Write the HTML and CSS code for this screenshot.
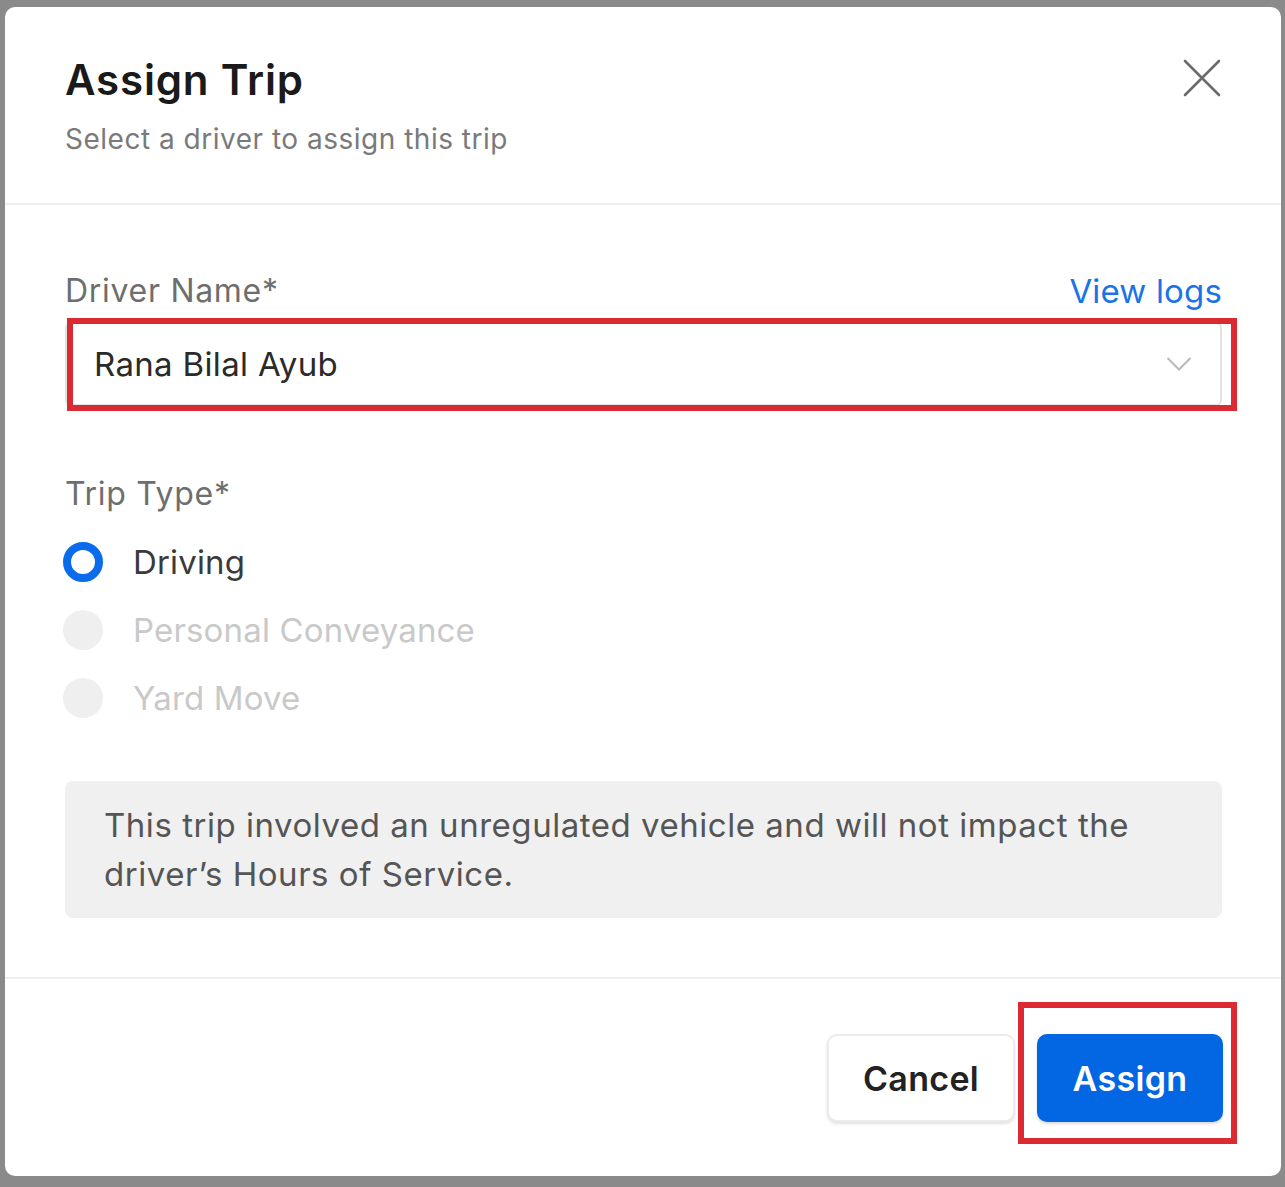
FILE: index.html
```html
<!DOCTYPE html>
<html lang="en">
<head>
<meta charset="utf-8">
<title>Assign Trip</title>
<link rel="stylesheet" href="styles.css">
</head>
<body>
<div class="dialog">
  <div class="header">
    <div class="titles">
      <h1 class="title">Assign Trip</h1>
      <p class="subtitle">Select a driver to assign this trip</p>
    </div>
    <button class="close" aria-label="Close">
      <svg width="38" height="38" viewBox="0 0 38 38"><path d="M2 2 L36 36 M36 2 L2 36" stroke="#6b6b6b" stroke-width="2.6" stroke-linecap="round" fill="none"/></svg>
    </button>
  </div>
  <div class="body">
    <div class="label-row">
      <span class="label">Driver Name*</span>
      <a class="link">View logs</a>
    </div>
    <div class="select-wrap">
      <div class="select">
        <span class="select-value">Rana Bilal Ayub</span>
        <svg class="chevron" width="26" height="16" viewBox="0 0 26 16"><path d="M1.5 2 L13 13.5 L24.5 2" stroke="#b9b9b9" stroke-width="2" fill="none"/></svg>
      </div>
      <div class="mark mark-select"></div>
    </div>
    <div class="label trip-label">Trip Type*</div>
    <div class="radios">
      <div class="radio checked"><span class="dot"></span><span class="radio-text">Driving</span></div>
      <div class="radio disabled"><span class="dot"></span><span class="radio-text">Personal Conveyance</span></div>
      <div class="radio disabled"><span class="dot"></span><span class="radio-text">Yard Move</span></div>
    </div>
    <div class="info">This trip involved an unregulated vehicle and will not impact the driver’s Hours of Service.</div>
  </div>
  <div class="footer">
    <button class="btn btn-cancel">Cancel</button>
    <div class="assign-wrap">
      <button class="btn btn-assign">Assign</button>
      <div class="mark mark-assign"></div>
    </div>
  </div>
</div>
</body>
</html>
```
FILE: styles.css
```css
html, body {
  margin: 0;
  padding: 0;
}
body {
  background: #8a8a8a;
  font-family: Inter, "Noto Sans", "Liberation Sans", sans-serif;
  width: 1285px;
  height: 1187px;
  overflow: hidden;
  letter-spacing: 0.01em;
}
.dialog {
  margin: 7px 0 0 5px;
  width: 1276px;
  height: 1169px;
  background: #fff;
  border-radius: 10px;
  display: flex;
  flex-direction: column;
  box-sizing: border-box;
}
.header {
  height: 198px;
  box-sizing: border-box;
  border-bottom: 2px solid #efefef;
  padding: 49px 60px 0 60px;
  display: flex;
  justify-content: space-between;
  align-items: flex-start;
}
.title {
  margin: 0;
  font-size: 42px;
  line-height: 48px;
  font-weight: 600;
  color: #1a1a1a;
  letter-spacing: 0.02em;
}
.subtitle {
  margin: 18px 0 0;
  font-size: 28px;
  line-height: 34px;
  color: #7a7a7a;
  letter-spacing: 0.018em;
}
.close {
  border: 0;
  background: none;
  padding: 0;
  margin: 3px 0 0 0;
  width: 38px;
  height: 38px;
  cursor: pointer;
}
.body {
  flex: 1;
  padding: 68px 59px 0 60px;
  display: flex;
  flex-direction: column;
  border-bottom: 2px solid #efefef;
}
.label-row {
  display: flex;
  justify-content: space-between;
  align-items: center;
}
.label {
  font-size: 32px;
  line-height: 36px;
  color: #6e6e6e;
  letter-spacing: 0.022em;
}
.link {
  font-size: 33px;
  line-height: 36px;
  color: #1a73e8;
  cursor: pointer;
}
.select-wrap {
  position: relative;
  margin-top: 13px;
}
.select {
  height: 84px;
  box-sizing: border-box;
  border: 2px solid #e2e2e2;
  border-radius: 6px;
  display: flex;
  align-items: center;
  justify-content: space-between;
  padding: 0 28px 0 27px;
}
.select-value {
  font-size: 33px;
  color: #2a2a2a;
  letter-spacing: 0.01em;
}
.chevron {
  display: block;
}
.mark {
  position: absolute;
  border: 6px solid #d92b31;
  pointer-events: none;
}
.mark-select {
  left: 2px;
  right: -15px;
  top: -4px;
  bottom: -5px;
}
.trip-label {
  margin-top: 70px;
}
.radios {
  margin-top: 16px;
  display: flex;
  flex-direction: column;
}
.radio {
  height: 68px;
  display: flex;
  align-items: center;
}
.dot {
  width: 40px;
  height: 40px;
  box-sizing: border-box;
  border-radius: 50%;
  margin-left: -2px;
  margin-right: 30px;
}
.checked .dot {
  border: 8px solid #0a6cea;
  background: #fff;
}
.disabled .dot {
  background: #efefef;
}
.radio-text {
  font-size: 33px;
  color: #3a3a3a;
}
.disabled .radio-text {
  color: #c9c9c9;
}
.info {
  margin-top: 49px;
  background: #f0f0f0;
  border-radius: 8px;
  padding: 20px 40px 19px 39px;
  font-size: 33px;
  line-height: 49px;
  color: #555;
  letter-spacing: 0.016em;
}
.footer {
  height: 197px;
  box-sizing: border-box;
  display: flex;
  justify-content: flex-end;
  align-items: flex-start;
  padding: 55px 58px 0 0;
  gap: 22px;
}
.btn {
  height: 88px;
  border-radius: 10px;
  font-family: inherit;
  font-size: 34px;
  font-weight: 600;
  letter-spacing: 0.01em;
  cursor: pointer;
}
.btn-cancel {
  width: 188px;
  background: #fff;
  color: #222;
  border: 2px solid #ececec;
  box-shadow: 0 2px 3px rgba(0, 0, 0, 0.12);
}
.assign-wrap {
  position: relative;
}
.btn-assign {
  display: block;
  width: 186px;
  background: #0366e2;
  color: #fff;
  border: 0;
  box-shadow: 0 2px 3px rgba(0, 0, 0, 0.15);
}
.mark-assign {
  left: -19px;
  right: -14px;
  top: -32px;
  bottom: -22px;
}
```
